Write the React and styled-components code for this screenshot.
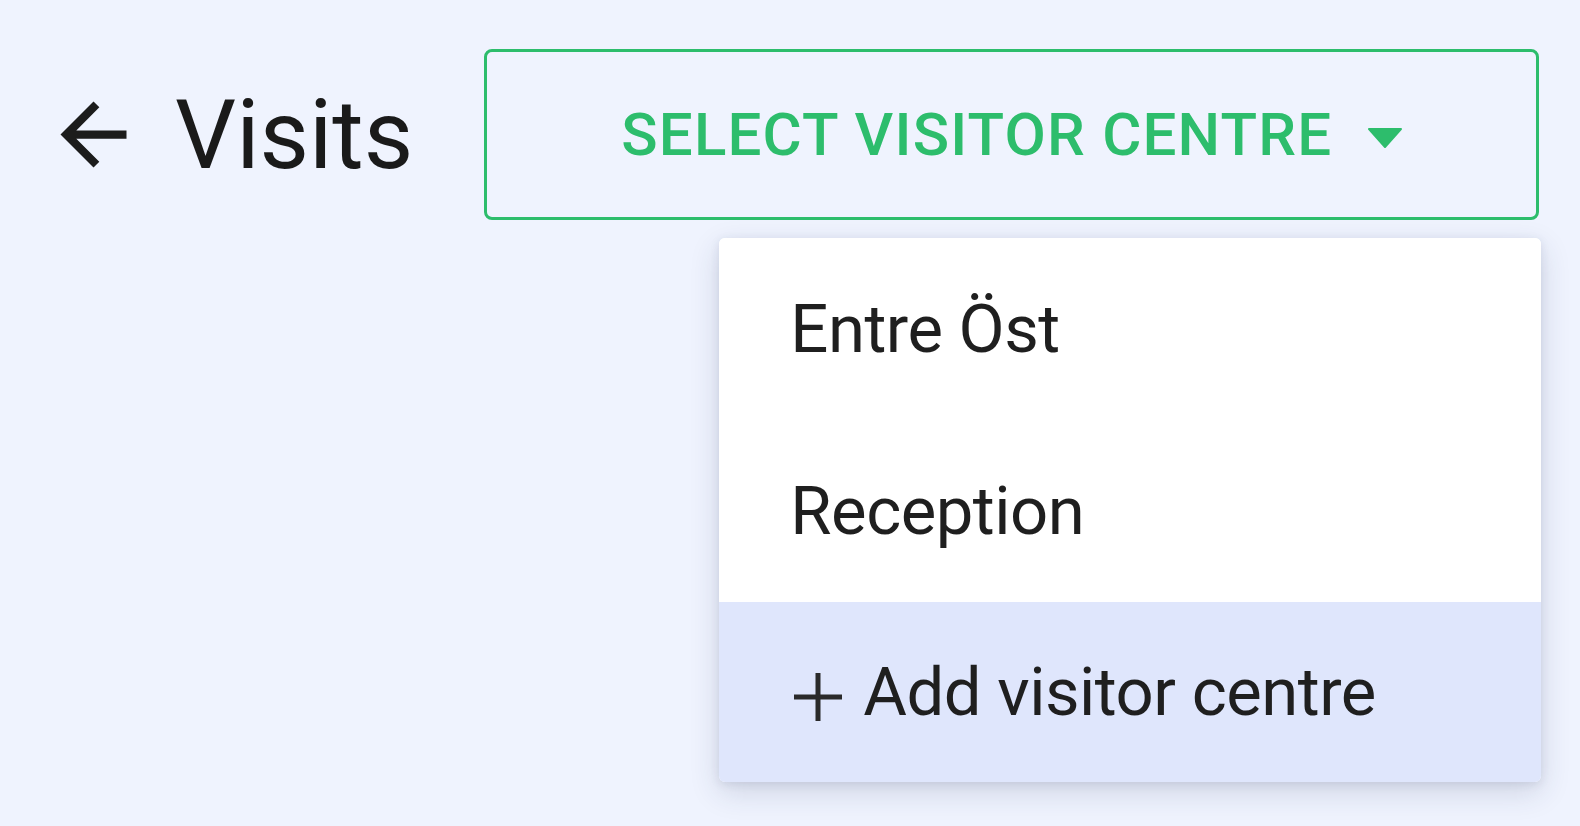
import React from 'react';
import styled, { createGlobalStyle } from 'styled-components';

const GlobalStyle = createGlobalStyle`
    html, body {
        margin: 0;
        padding: 0;
        background: #eff3fe;
    }
    body {
        font-family: Roboto, "Noto Sans", sans-serif;
        color: rgba(0, 0, 0, 0.87);
    }
`;

const centres = ['Entre Öst', 'Reception'];

export default function App() {
    return (
        <>
            <GlobalStyle />
            <Page>
                <Header>
                    <BackButton aria-label='back'>
                        <svg viewBox='0 0 24 24' width='99' height='99'>
                            <path fill='#1c1c1c' d='M20 11H7.83l5.59-5.59L12 4l-8 8 8 8 1.41-1.41L7.83 13H20v-2z' />
                        </svg>
                    </BackButton>
                    <Title>Visits</Title>
                    <SelectWrap>
                        <SelectButton>
                            SELECT VISITOR CENTRE
                            <svg viewBox='0 0 34 20' width='34' height='20'>
                                <path fill='currentColor' d='M1 1h32L17 19z' stroke='currentColor' strokeWidth='2' strokeLinejoin='round' />
                            </svg>
                        </SelectButton>
                        <Menu>
                            {centres.map(name => (
                                <MenuItem key={name}>{name}</MenuItem>
                            ))}
                            <MenuItem $action>
                                <PlusIcon viewBox='0 0 48 48' width='48' height='48'>
                                    <path stroke='#2a2a2a' strokeWidth='5' d='M24 0v48M0 24h48' />
                                </PlusIcon>
                                Add visitor centre
                            </MenuItem>
                        </Menu>
                    </SelectWrap>
                </Header>
            </Page>
        </>
    );
}

const Page = styled.div`
    min-height: 826px;
    padding: 49px 0 0 44px;
    box-sizing: border-box;
`;

const Header = styled.div`
    display: flex;
    align-items: center;
`;

const BackButton = styled.div`
    display: flex;
    width: 99px;
    height: 99px;
`;

const Title = styled.h1`
    margin: 0 0 0 32px;
    font-size: 96px;
    font-weight: 400;
    line-height: 1;
    color: #1a1a1a;
`;

const SelectWrap = styled.div`
    position: relative;
    margin-left: 71px;
`;

const SelectButton = styled.button`
    display: flex;
    align-items: center;
    justify-content: center;
    gap: 36px;
    width: 1055px;
    height: 171px;
    box-sizing: border-box;
    border: 3px solid #2dbd6c;
    border-radius: 8px;
    background: transparent;
    color: #2dbd6c;
    font-family: Roboto, sans-serif;
    font-weight: 500;
    font-size: 60px;
    letter-spacing: 1.2px;
    cursor: pointer;

    svg {
        margin-top: 6px;
    }
`;

const Menu = styled.div`
    position: absolute;
    top: 189px;
    right: -2px;
    width: 822px;
    background: #fff;
    border-radius: 6px;
    overflow: hidden;
    box-shadow: 0 10px 30px rgba(40, 50, 90, 0.16), 0 2px 10px rgba(40, 50, 90, 0.1);
`;

const MenuItem = styled.div`
    display: flex;
    align-items: center;
    gap: 21px;
    height: ${p => (p.$action ? '180px' : '182px')};
    padding-left: 71px;
    font-size: 67px;
    letter-spacing: -0.5px;
    color: #1f1f1f;
    background: ${p => (p.$action ? '#dfe6fc' : '#fff')};
`;

const PlusIcon = styled.svg`
    margin: 10px 0 0 4px;
    flex-shrink: 0;
`;
